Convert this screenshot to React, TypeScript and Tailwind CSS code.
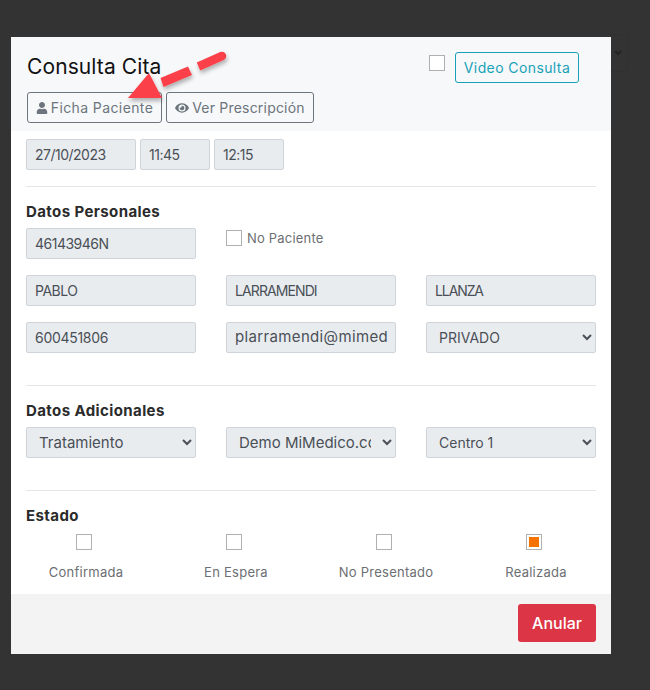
import React from 'react';
import { FaUser, FaEye } from 'react-icons/fa';

const Field: React.FC<{ value: string; className?: string; text?: string }> = ({ value, className, text }) => (
    <div className={`h-[31px] px-2 flex items-center bg-[#e9ecef] border border-[#ced4da] rounded-[2px] text-[#495057] overflow-hidden whitespace-nowrap ${className ?? 'w-[170px]'} ${text ?? 'text-[14px]'}`}>
        {value}
    </div>
);

const Picker: React.FC<{ value: string; text?: string }> = ({ value, text }) => (
    <select
        defaultValue={value}
        className={`w-[170px] h-[31px] px-2 bg-[#e9ecef] border border-[#ced4da] rounded-[2px] text-[#495057] ${text ?? 'text-[14px]'}`}
    >
        <option>{value}</option>
    </select>
);

const Box: React.FC<{ checked?: boolean }> = ({ checked }) => (
    <span className="w-4 h-4 border border-[#b0b0b0] bg-white flex items-center justify-center shrink-0">
        {checked && <span className="w-[10px] h-[10px] bg-[#f57200]" />}
    </span>
);

const Estado: React.FC<{ label: string; checked?: boolean }> = ({ label, checked }) => (
    <div className="w-[150px] shrink-0 flex flex-col items-center gap-[14px]">
        <span className="mr-1"><Box checked={checked} /></span>
        <span className="text-[13px] leading-[16px] tracking-[0.25px] text-[#6c6f73] whitespace-nowrap">{label}</span>
    </div>
);

const SectionTitle: React.FC<{ children: React.ReactNode }> = ({ children }) => (
    <h3 className="text-[15px] leading-[16px] font-bold tracking-[0.4px] text-[#2b2b2b]">{children}</h3>
);

const App: React.FC = () => {
    return (
        <div className="relative w-[650px] h-[690px] bg-[#333333] pt-[37px] pl-[11px] overflow-hidden font-['Inter','Liberation_Sans',sans-serif]">
            {/* select behind the overlay, barely visible */}
            <div className="absolute left-[611px] top-[34px] w-[17px] h-[38px] border-r border-t border-b border-[#303030] flex items-center justify-center pr-[3px]">
                <svg width="8" height="6" viewBox="0 0 8 6" fill="none" stroke="#242424" strokeWidth="2"><path d="M1 1l3 3 3-3" /></svg>
            </div>

            <div className="relative w-[600px] h-[617px] bg-white flex flex-col">
                {/* header */}
                <div className="h-[94px] bg-[#f7f8fa] pl-4 pr-8 pt-[15px] flex justify-between">
                    <div>
                        <h2 className="text-[21px] leading-[30px] tracking-[0.1px] text-[#111]">Consulta Cita</h2>
                        <div className="mt-[10px] flex gap-1">
                            <button className="h-[31px] w-[135px] border border-[#6c757d] rounded-[3px] text-[14px] tracking-[0.4px] text-[#6c757d] flex items-center justify-center gap-[3px]">
                                <FaUser className="w-3 h-3" />
                                Ficha Paciente
                            </button>
                            <button className="h-[31px] w-[148px] border border-[#6c757d] rounded-[3px] text-[14px] tracking-[0.2px] text-[#6c757d] flex items-center justify-center gap-[3px]">
                                <FaEye className="w-[14px] h-[14px]" />
                                Ver Prescripción
                            </button>
                        </div>
                    </div>
                    <div className="flex items-start gap-[10px]">
                        <span className="mt-[3px]"><Box /></span>
                        <button className="h-[31px] w-[124px] border border-[#17a2b8] rounded-[3px] text-[14px] tracking-[0.4px] text-[#17a2b8]">
                            Video Consulta
                        </button>
                    </div>
                </div>

                {/* body */}
                <div className="flex-1 px-[15px] pt-2">
                    <div className="flex gap-1">
                        <Field value="27/10/2023" className="w-[110px]" text="text-[14px] tracking-[-0.5px]" />
                        <Field value="11:45" className="w-[70px]" text="text-[14px] tracking-[-0.5px]" />
                        <Field value="12:15" className="w-[70px]" text="text-[14px] tracking-[-0.5px]" />
                    </div>
                    <hr className="mt-4 border-[#e4e6e8]" />

                    <div className="mt-[17px]"><SectionTitle>Datos Personales</SectionTitle></div>
                    <div className="mt-2 flex gap-[30px]">
                        <Field value="46143946N" text="text-[14px] tracking-[-0.5px]" />
                        <div className="flex items-start gap-[5px] pt-[2px]">
                            <Box />
                            <span className="text-[13px] leading-[16px] tracking-[0.2px] text-[#6c6f73]">No Paciente</span>
                        </div>
                    </div>
                    <div className="mt-4 flex gap-[30px]">
                        <Field value="PABLO" text="text-[14px] tracking-[-0.5px]" />
                        <Field value="LARRAMENDI" text="text-[14px] tracking-[-0.9px]" />
                        <Field value="LLANZA" text="text-[14px] tracking-[-1.1px]" />
                    </div>
                    <div className="mt-4 flex gap-[30px]">
                        <Field value="600451806" text="text-[14px] tracking-[-0.3px]" />
                        <Field value="plarramendi@mimed" text="text-[15px] tracking-[0.35px]" />
                        <Picker value="PRIVADO" />
                    </div>
                    <hr className="mt-8 border-[#e4e6e8]" />

                    <div className="mt-[17px]"><SectionTitle>Datos Adicionales</SectionTitle></div>
                    <div className="mt-2 flex gap-[30px]">
                        <Picker value="Tratamiento" text="text-[15px]" />
                        <Picker value="Demo MiMedico.com" text="text-[15px]" />
                        <Picker value="Centro 1" />
                    </div>
                    <hr className="mt-8 border-[#e4e6e8]" />

                    <div className="mt-[17px]"><SectionTitle>Estado</SectionTitle></div>
                    <div className="mt-[10px] -ml-[15px] flex">
                        <Estado label="Confirmada" />
                        <Estado label="En Espera" />
                        <Estado label="No Presentado" />
                        <Estado label="Realizada" checked />
                    </div>
                </div>

                {/* footer */}
                <div className="h-[60px] bg-[#f3f3f3] pr-[15px] pt-[10px] flex items-start justify-end">
                    <button className="w-[78px] h-[38px] bg-[#dc3545] rounded-[3px] text-[16px] font-medium text-white">Anular</button>
                </div>

                {/* annotation arrow over the screenshot */}
                <svg className="absolute left-0 top-0 pointer-events-none" width="260" height="90" viewBox="11 37 260 90" fill="none">
                    <defs>
                        <filter id="arrowShadow" x="-20%" y="-20%" width="140%" height="150%">
                            <feDropShadow dx="1" dy="3" stdDeviation="2" floodColor="#000" floodOpacity="0.3" />
                        </filter>
                    </defs>
                    <g filter="url(#arrowShadow)" fill="#fb4049">
                        <polygon points="149,73 128,98 162,98" />
                        <polygon points="160.5,78 188,66.5 192,75 163.5,87" />
                        <path d="M198.5 66.5 L222 56" stroke="#fb4049" strokeWidth="8.5" />
                        <circle cx="222" cy="56" r="4.25" />
                    </g>
                </svg>
            </div>
        </div>
    );
};

export default App;
